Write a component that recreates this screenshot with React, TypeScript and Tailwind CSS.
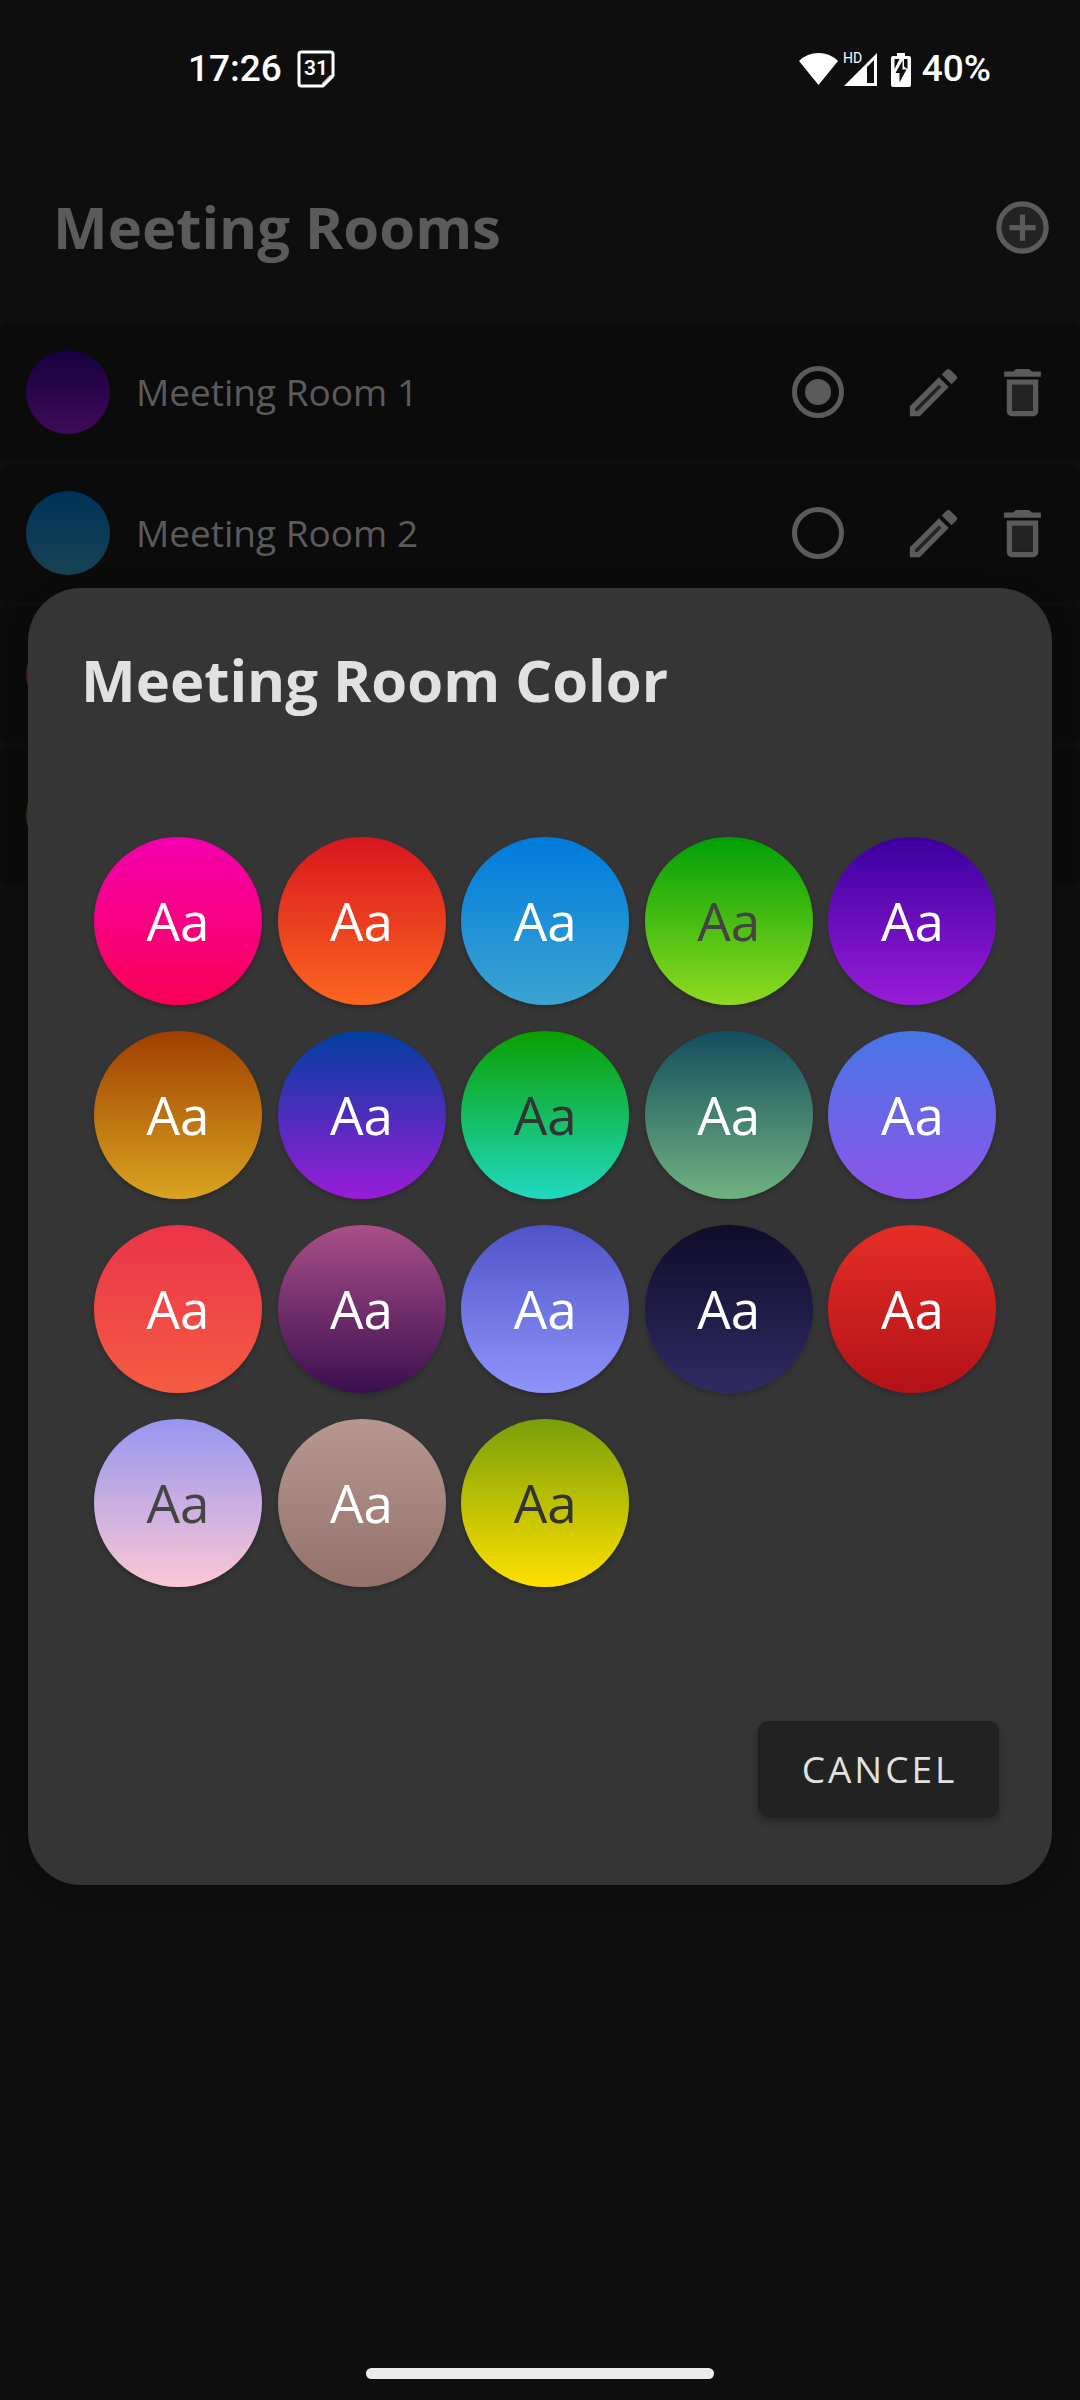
const rooms = [
  { id: 1, name: "Meeting Room 1", covered: false, fill: "bg-[linear-gradient(#170040,#3e0b58)]" },
  { id: 2, name: "Meeting Room 2", covered: false, fill: "bg-[linear-gradient(#003259,#184353)]" },
  { id: 3, name: "Meeting Room 3", covered: true, fill: "bg-[linear-gradient(#570a0e,#64270d)]" },
  { id: 4, name: "Meeting Room 4", covered: true, fill: "bg-[linear-gradient(#401a00,#56410d)]" },
];

const swatches = [
  { name: "Magenta", style: "bg-[linear-gradient(#f400b0,#fb0054)] text-white" },
  { name: "Orange", style: "bg-[linear-gradient(#d8161f,#fc661f)] text-white" },
  { name: "Blue", style: "bg-[linear-gradient(#007bdd,#3ba4d0)] text-white" },
  { name: "Lime", style: "bg-[linear-gradient(#009f06,#8fdb20)] text-[#444444]" },
  { name: "Purple", style: "bg-[linear-gradient(#3a009f,#991cd8)] text-white" },
  { name: "Amber", style: "bg-[linear-gradient(#9f3f00,#d9a420)] text-white" },
  { name: "Indigo", style: "bg-[linear-gradient(#003f9f,#991cd8)] text-white" },
  { name: "Green", style: "bg-[linear-gradient(#0a9f00,#20d9c0)] text-[#333333]" },
  { name: "Teal", style: "bg-[linear-gradient(#134e5e,#71b280)] text-white" },
  { name: "Periwinkle", style: "bg-[linear-gradient(#4776e6,#8e54e9)] text-white" },
  { name: "Coral", style: "bg-[linear-gradient(#eb3349,#f45c43)] text-white" },
  { name: "Plum", style: "bg-[linear-gradient(#aa4f88,#3a0f4f)] text-white" },
  { name: "Violet", style: "bg-[linear-gradient(#4e54c8,#8f94fb)] text-white" },
  { name: "Midnight", style: "bg-[linear-gradient(#0f0c29,#302b63)] text-white" },
  { name: "Red", style: "bg-[linear-gradient(#e52d27,#b31217)] text-white" },
  { name: "Pastel", style: "bg-[linear-gradient(#9796f0,#fbc7d4)] text-[#444444]" },
  { name: "Rose brown", style: "bg-[linear-gradient(#b79891,#94716b)] text-white" },
  { name: "Yellow", style: "bg-[linear-gradient(#7a9f0a,#ffe000)] text-[#333333]" },
];

function StatusBar() {
  return (
    <div className="flex h-[138px] items-center justify-between pr-[89px] pl-[188px] font-['Roboto'] text-[37px] font-medium text-white">
      <div className="flex items-center gap-[15px]">
        <time>17:26</time>
        <svg className="h-[38px] w-[38px]" viewBox="0 0 38 38" fill="none" aria-label="Calendar">
          <path d="M4.500 2H33.500Q36 2 36 4.500V26L26 36H4.500Q2 36 2 33.500V4.500Q2 2 4.500 2Z" stroke="white" strokeWidth="3" strokeLinejoin="round" />
          <path d="M25 36V33L33 25H36V27L27 36Z" fill="white" fillOpacity="0.7" />
          <text x="19" y="25" textAnchor="middle" fontSize="21" fontWeight="600" fill="white">31</text>
        </svg>
      </div>
      <div className="flex items-center">
        <svg className="h-[36px] w-[112px]" viewBox="0 0 112 36" aria-label="Wi-Fi, HD signal, charging">
          <path d="M19.500 34L0 10Q8 2 19.500 2T39 10Z" fill="white" />
          <text x="44" y="12" fontSize="14" fontWeight="400" fill="white">HD</text>
          <path d="M45 35L78 2V35ZM75 9L68 16V32H75Z" fill="white" fillRule="evenodd" />
          <path d="M98 2H106V5H110Q112 5 112 7V34Q112 36 110 36H94Q92 36 92 34V7Q92 5 94 5H98Z" fill="white" />
          <path d="M95.500 8H100.500L95.500 18ZM105 8H108.500V18L105 15.500Z" fill="#0e0e0e" />
          <path d="M103.500 9.500V18.500H107.500L100.500 31.500V22H96.500Z" fill="#0e0e0e" />
        </svg>
        <span className="ml-[11px]">40%</span>
      </div>
    </div>
  );
}

function AddIcon() {
  return (
    <svg className="h-[63px] w-[63px]" viewBox="0 0 24 24" aria-hidden="true">
      <circle cx="12" cy="12" r="9" fill="#232323" stroke="#5b5b5b" strokeWidth="2" />
      <path d="M13 7h-2v4H7v2h4v4h2v-4h4v-2h-4z" fill="#5b5b5b" />
    </svg>
  );
}

function EditIcon() {
  return (
    <svg className="h-[63px] w-[63px]" viewBox="0 0 24 24" aria-hidden="true">
      <path d="M5 18.080V19h.920l9.060-9.060-.920-.920z" fill="#232323" />
      <path
        d="M20.710 7.040a.996.996 0 0 0 0-1.410l-2.340-2.340c-.200-.200-.450-.290-.710-.290s-.510.100-.700.290l-1.830 1.830 3.750 3.750 1.830-1.830zM3 17.250V21h3.750L17.810 9.940l-3.750-3.750L3 17.250zM5.920 19H5v-.920l9.060-9.060.920.920L5.920 19z"
        fill="#5b5b5b"
      />
    </svg>
  );
}

function DeleteIcon() {
  return (
    <svg className="h-[63px] w-[63px]" viewBox="0 0 24 24" aria-hidden="true">
      <path d="M8 9h8v10H8z" fill="#232323" />
      <path
        d="M15.500 4l-1-1h-5l-1 1H5v2h14V4zM6 19c0 1.100.900 2 2 2h8c1.100 0 2-.900 2-2V7H6v12zM8 9h8v10H8V9z"
        fill="#5b5b5b"
      />
    </svg>
  );
}

function RoomList() {
  return (
    <ul className="mt-[7px] flex flex-col gap-[3px]">
      {rooms.map((room) => (
        <li key={room.id} className="flex h-[138px] items-center rounded-[10px] bg-[#0b0b0b] px-[26px]">
          <span className={`h-[84px] w-[84px] rounded-full ${room.fill}`} />
          {room.covered ? (
            <span className="flex-1" />
          ) : (
            <label htmlFor={`room-${room.id}`} className="ml-[26px] flex-1 text-[37px]">
              {room.name}
            </label>
          )}
          <input
            id={`room-${room.id}`}
            type="radio"
            name="room"
            aria-label={room.name}
            defaultChecked={room.id === 1}
            className="h-[52px] w-[52px] appearance-none rounded-full border-[5px] border-[#5b5b5b] bg-clip-content p-[8px] checked:bg-[#5b5b5b]"
          />
          <button type="button" aria-label={`Edit ${room.name}`} className="ml-[58px]">
            <EditIcon />
          </button>
          <button type="button" aria-label={`Delete ${room.name}`} className="ml-[26px]">
            <DeleteIcon />
          </button>
        </li>
      ))}
    </ul>
  );
}

function ColorDialog() {
  return (
    <section
      role="dialog"
      aria-modal="true"
      aria-labelledby="dialog-title"
      className="w-full rounded-[53px] bg-[#353535] px-[53px] pt-[52px] pb-[68px] shadow-[0_4px_24px_rgba(0,0,0,0.2)]"
    >
      <h2 id="dialog-title" className="text-[58px] leading-[80px] font-bold text-[#e1e1e1]">
        Meeting Room Color
      </h2>
      <div className="mt-[117px] grid grid-cols-5 gap-y-[26px]">
        {swatches.map((swatch) => (
          <button
            key={swatch.name}
            type="button"
            title={swatch.name}
            className={`ml-[13px] h-[168px] w-[168px] rounded-full text-[53px] shadow-[0_3px_5px_rgba(0,0,0,0.2)] ${swatch.style}`}
          >
            Aa
          </button>
        ))}
      </div>
      <div className="mt-[134px] flex justify-end">
        <button
          type="button"
          className="h-[96px] w-[241px] rounded-[10px] bg-[#222222] pl-[2px] text-[37px] tracking-[3px] text-[#e1e1e1] shadow-[0_4px_8px_rgba(0,0,0,0.3)]"
        >
          CANCEL
        </button>
      </div>
    </section>
  );
}

export default function App() {
  return (
    <div className="relative flex min-h-screen flex-col bg-[#0e0e0e] font-['Open_Sans',sans-serif] text-[#5b5b5b]">
      <StatusBar />
      <header className="flex h-[178px] items-center justify-between pr-[26px] pl-[53px]">
        <h1 className="text-[58px] leading-[80px] font-bold">Meeting Rooms</h1>
        <button type="button" aria-label="Add meeting room">
          <AddIcon />
        </button>
      </header>
      <RoomList />
      <div className="absolute inset-0 flex items-center px-[28px] pt-[73px]">
        <ColorDialog />
      </div>
      <div className="mt-auto flex justify-center pb-[21px]">
        <div className="h-[11px] w-[348px] rounded-full bg-[#ebebeb]" />
      </div>
    </div>
  );
}
